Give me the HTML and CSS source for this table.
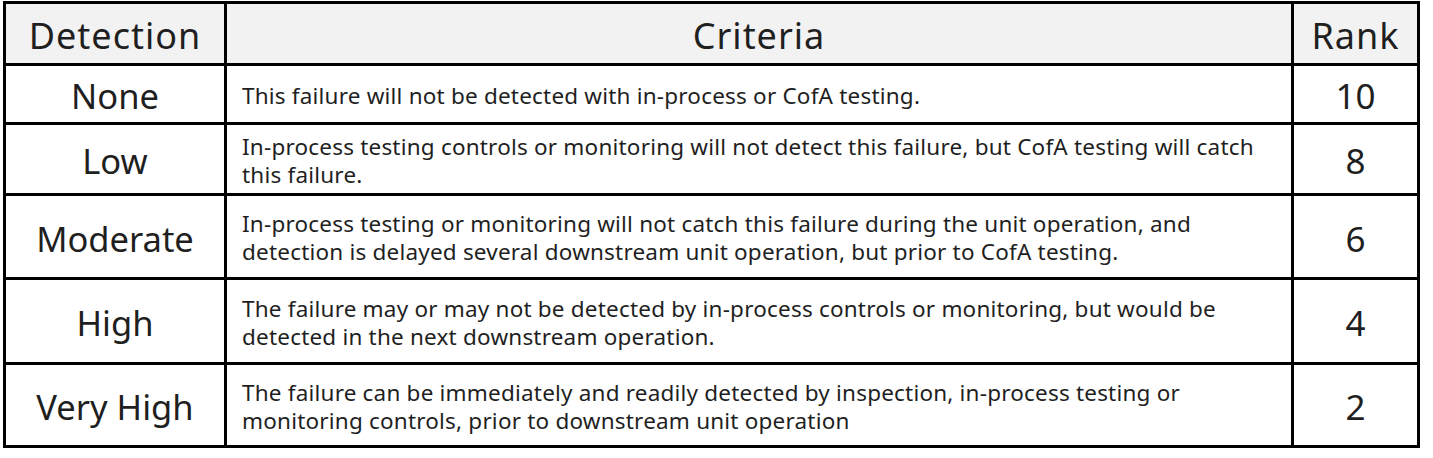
FILE: index.html
```html
<!DOCTYPE html>
<html>
<head>
<meta charset="utf-8">
<link rel="stylesheet" href="styles.css">
</head>
<body>
<div class="table">
  <div class="cell head">Detection</div>
  <div class="cell head">Criteria</div>
  <div class="cell head">Rank</div>

  <div class="cell label">None</div>
  <div class="cell crit">This failure will not be detected with in-process or CofA testing.</div>
  <div class="cell rank">10</div>

  <div class="cell label">Low</div>
  <div class="cell crit">In-process testing controls or monitoring will not detect this failure, but CofA testing will catch this failure.</div>
  <div class="cell rank">8</div>

  <div class="cell label">Moderate</div>
  <div class="cell crit">In-process testing or monitoring will not catch this failure during the unit operation, and detection is delayed several downstream unit operation, but prior to CofA testing.</div>
  <div class="cell rank">6</div>

  <div class="cell label">High</div>
  <div class="cell crit">The failure may or may not be detected by in-process controls or monitoring, but would be detected in the next downstream operation.</div>
  <div class="cell rank">4</div>

  <div class="cell label">Very High</div>
  <div class="cell crit">The failure can be immediately and readily detected by inspection, in-process testing or monitoring controls, prior to downstream unit operation</div>
  <div class="cell rank">2</div>
</div>
</body>
</html>
```

FILE: styles.css
```css
html, body {
  margin: 0;
  padding: 0;
  background: #ffffff;
}

body {
  font-family: "Noto Sans", "Open Sans", sans-serif;
  color: #1f1f1f;
}

.table {
  margin: 1px 0 0 3px;
  width: 1417px;
  box-sizing: border-box;
  display: grid;
  grid-template-columns: 218px 1064px 123px;
  grid-template-rows: 59px 56px 68px 81px 82px 80px;
  gap: 3px;
  padding: 3px;
  background: #000000;
}

.cell {
  background: #ffffff;
  display: flex;
  align-items: center;
  justify-content: center;
}

.head {
  background: #f2f2f2;
  font-size: 36px;
  letter-spacing: 1px;
  padding-top: 3px;
}

.label {
  font-size: 34.5px;
  padding-top: 3px;
}

.rank {
  font-size: 35px;
  padding-top: 3px;
}

.crit {
  justify-content: flex-start;
  padding: 3px 30px 0 15px;
  font-size: 22.5px;
  letter-spacing: 0.2px;
  line-height: 28px;
}
```
